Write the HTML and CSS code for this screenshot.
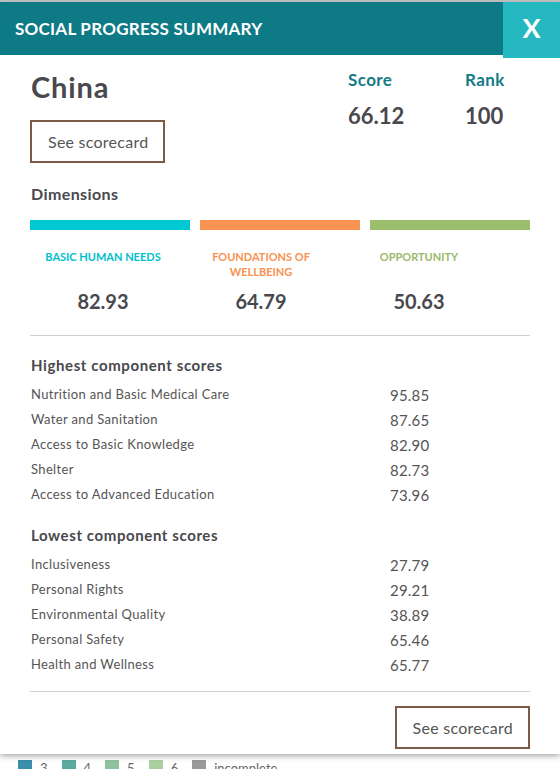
FILE: index.html
```html
<!DOCTYPE html>
<html>
<head>
<meta charset="utf-8">
<link rel="stylesheet" href="styles.css">
</head>
<body>
<div class="topstrip"></div>
<div class="modal">
  <div class="header">
    <div class="title">SOCIAL PROGRESS SUMMARY</div>
    <div class="close">X</div>
  </div>
  <div class="body">
    <div class="intro">
      <div class="country">
        <h1 class="name">China</h1>
        <div class="btn">See scorecard</div>
      </div>
      <div class="stats">
        <div class="stat">
          <div class="stat-label">Score</div>
          <div class="stat-value">66.12</div>
        </div>
        <div class="stat">
          <div class="stat-label">Rank</div>
          <div class="stat-value">100</div>
        </div>
      </div>
    </div>
    <h2 class="section">Dimensions</h2>
    <div class="bars">
      <div class="bar bhn"></div>
      <div class="bar fow"></div>
      <div class="bar opp"></div>
    </div>
    <div class="dims">
      <div class="dim bhn">
        <div class="dim-label">BASIC HUMAN NEEDS</div>
        <div class="dim-value">82.93</div>
      </div>
      <div class="dim fow">
        <div class="dim-label">FOUNDATIONS OF<br>WELLBEING</div>
        <div class="dim-value">64.79</div>
      </div>
      <div class="dim opp">
        <div class="dim-label">OPPORTUNITY</div>
        <div class="dim-value">50.63</div>
      </div>
    </div>
    <div class="rule"></div>
    <h3 class="list-title">Highest component scores</h3>
    <div class="rows">
      <div class="row"><span class="rname">Nutrition and Basic Medical Care</span><span class="rval">95.85</span></div>
      <div class="row"><span class="rname">Water and Sanitation</span><span class="rval">87.65</span></div>
      <div class="row"><span class="rname">Access to Basic Knowledge</span><span class="rval">82.90</span></div>
      <div class="row"><span class="rname">Shelter</span><span class="rval">82.73</span></div>
      <div class="row"><span class="rname">Access to Advanced Education</span><span class="rval">73.96</span></div>
    </div>
    <h3 class="list-title lowest">Lowest component scores</h3>
    <div class="rows">
      <div class="row"><span class="rname">Inclusiveness</span><span class="rval">27.79</span></div>
      <div class="row"><span class="rname">Personal Rights</span><span class="rval">29.21</span></div>
      <div class="row"><span class="rname">Environmental Quality</span><span class="rval">38.89</span></div>
      <div class="row"><span class="rname">Personal Safety</span><span class="rval">65.46</span></div>
      <div class="row"><span class="rname">Health and Wellness</span><span class="rval">65.77</span></div>
    </div>
    <div class="rule bottom"></div>
    <div class="footer">
      <div class="btn">See scorecard</div>
    </div>
  </div>
</div>
<div class="legend">
  <div class="lg"><span class="sw s3"></span>3</div>
  <div class="lg"><span class="sw s4"></span>4</div>
  <div class="lg"><span class="sw s5"></span>5</div>
  <div class="lg"><span class="sw s6"></span>6</div>
  <div class="lg"><span class="sw si"></span>incomplete</div>
</div>
</body>
</html>
```
FILE: styles.css
```css
html, body {
  margin: 0;
  padding: 0;
}
body {
  background: #fff;
  font-family: Lato, "Open Sans", sans-serif;
  color: #4a4a4f;
  width: 560px;
  height: 769px;
  overflow: hidden;
}
.topstrip {
  height: 2px;
  background: #c8c8c8;
}
.modal {
  background: #fff;
  box-shadow: 0 2px 6px rgba(0,0,0,0.35);
  position: relative;
  z-index: 1;
  padding-bottom: 5px;
}
.header {
  display: flex;
  height: 53px;
  background: #0e7a85;
  align-items: stretch;
}
.title {
  flex: 1;
  color: #fff;
  font-weight: 700;
  font-size: 17px;
  padding-left: 15px;
  line-height: 53px;
  letter-spacing: 0.25px;
}
.close {
  width: 57px;
  height: 56px;
  background: #26b8c0;
  color: #fff;
  font-weight: 700;
  font-size: 27px;
  text-align: center;
  line-height: 52px;
}
.body {
  padding: 0 30px;
}
.intro {
  display: flex;
  justify-content: space-between;
}
.name {
  margin: 16px 0 0 1px;
  font-size: 29px;
  font-weight: 700;
  line-height: 32px;
  letter-spacing: 0.9px;
  color: #48484d;
}
.btn {
  display: inline-block;
  border: 2px solid #7b5b46;
  height: 39px;
  line-height: 39px;
  padding: 0 15px 0 16px;
  font-size: 16px;
  letter-spacing: 0.25px;
  color: #555;
}
.country .btn {
  margin-top: 17px;
}
.stats {
  display: grid;
  grid-template-columns: 117px 65px;
  margin-top: 15px;
}
.stat-label {
  color: #137b85;
  font-weight: 700;
  font-size: 17px;
  line-height: 20px;
  letter-spacing: 0.4px;
}
.stat-value {
  margin-top: 13px;
  font-weight: 700;
  font-size: 22px;
  line-height: 26px;
  color: #48484d;
}
.section {
  margin: 21px 0 0 1px;
  font-size: 16px;
  font-weight: 700;
  line-height: 20px;
  letter-spacing: 0.4px;
  color: #48484d;
}
.bars {
  display: grid;
  grid-template-columns: repeat(3, 1fr);
  column-gap: 10px;
  margin-top: 16px;
}
.bar {
  height: 10px;
}
.bar.bhn { background: #00c8d5; }
.bar.fow { background: #fb9452; }
.bar.opp { background: #9bbf6c; }
.dims {
  display: grid;
  grid-template-columns: repeat(3, 158px);
  margin-left: -6px;
}
.dim {
  text-align: center;
}
.dim-label {
  font-size: 11px;
  font-weight: 700;
  line-height: 15px;
  height: 30px;
  margin-top: 19px;
}
.dim-value {
  font-size: 20px;
  font-weight: 700;
  line-height: 24px;
  margin-top: 10px;
  color: #48484d;
}
.bhn .dim-label { color: #00c0cc; }
.fow .dim-label { color: #f9914f; }
.opp .dim-label { color: #98b96a; }
.rule {
  height: 1px;
  background: #cfcfcf;
  margin-top: 22px;
}
.list-title {
  margin: 20px 0 0 1px;
  font-size: 15px;
  font-weight: 700;
  line-height: 18px;
  letter-spacing: 0.6px;
  color: #48484d;
}
.list-title.lowest {
  margin-top: 20px;
}
.rows {
  margin-top: 7px;
}
.row {
  display: flex;
  height: 25px;
  align-items: center;
}
.rname {
  width: 359px;
  padding-left: 1px;
  font-size: 13px;
  letter-spacing: 0.35px;
  color: #555;
}
.rval {
  font-size: 15px;
  letter-spacing: 0.2px;
  color: #555;
  padding-top: 2px;
}
.rule.bottom {
  margin-top: 15px;
}
.footer {
  display: flex;
  justify-content: flex-end;
  margin-top: 14px;
}
.legend {
  display: flex;
  padding-left: 18px;
  margin-top: 6px;
  font-size: 13px;
  color: #666;
}
.lg {
  display: flex;
  align-items: flex-start;
  margin-right: 14px;
}
.sw {
  display: inline-block;
  width: 14px;
  height: 10px;
  margin-right: 8px;
}
.s3 { background: #3a8fab; }
.s4 { background: #5da99f; }
.s5 { background: #8fc19c; }
.s6 { background: #a9d0a0; }
.si { background: #9a9a9a; }
```
